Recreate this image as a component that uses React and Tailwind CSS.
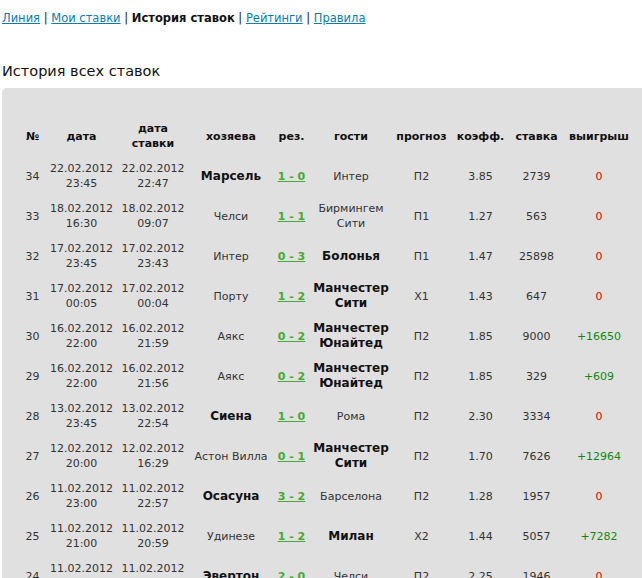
import React from 'react';

const rows = [
  ['34', '22.02.2012', '23:45', '22.02.2012', '22:47', ['Марсель'], true, '1 - 0', ['Интер'], false, 'П2', '3.85', '2739', '0'],
  ['33', '18.02.2012', '16:30', '18.02.2012', '09:07', ['Челси'], false, '1 - 1', ['Бирмингем', 'Сити'], false, 'П1', '1.27', '563', '0'],
  ['32', '17.02.2012', '23:45', '17.02.2012', '23:43', ['Интер'], false, '0 - 3', ['Болонья'], true, 'П1', '1.47', '25898', '0'],
  ['31', '17.02.2012', '00:05', '17.02.2012', '00:04', ['Порту'], false, '1 - 2', ['Манчестер', 'Сити'], true, 'X1', '1.43', '647', '0'],
  ['30', '16.02.2012', '22:00', '16.02.2012', '21:59', ['Аякс'], false, '0 - 2', ['Манчестер', 'Юнайтед'], true, 'П2', '1.85', '9000', '+16650'],
  ['29', '16.02.2012', '22:00', '16.02.2012', '21:56', ['Аякс'], false, '0 - 2', ['Манчестер', 'Юнайтед'], true, 'П2', '1.85', '329', '+609'],
  ['28', '13.02.2012', '23:45', '13.02.2012', '22:54', ['Сиена'], true, '1 - 0', ['Рома'], false, 'П2', '2.30', '3334', '0'],
  ['27', '12.02.2012', '20:00', '12.02.2012', '16:29', ['Астон Вилла'], false, '0 - 1', ['Манчестер', 'Сити'], true, 'П2', '1.70', '7626', '+12964'],
  ['26', '11.02.2012', '23:00', '11.02.2012', '22:57', ['Осасуна'], true, '3 - 2', ['Барселона'], false, 'П2', '1.28', '1957', '0'],
  ['25', '11.02.2012', '21:00', '11.02.2012', '20:59', ['Удинезе'], false, '1 - 2', ['Милан'], true, 'X2', '1.44', '5057', '+7282'],
  ['24', '11.02.2012', '19:00', '11.02.2012', '18:40', ['Эвертон'], true, '2 - 0', ['Челси'], false, 'П2', '2.25', '1946', '0'],
];

function Lines({ parts }) {
  return parts.map((p, i) => (
    <React.Fragment key={i}>
      {i > 0 && <br />}
      {p}
    </React.Fragment>
  ));
}

export default function App() {
  return (
    <div className="h-[578px] w-[642px] overflow-hidden bg-white text-[#333] text-[11px] leading-[15px]" style={{ fontFamily: '"DejaVu Sans", Verdana, sans-serif' }}>
      <div className="pl-[2px] pt-[11px] text-[11.5px] leading-[15px]">
        <a href="#" className="text-[#0a7dae] underline">Линия</a>
        <span className="text-[#222]"> | </span>
        <a href="#" className="text-[#0a7dae] underline">Мои ставки</a>
        <span className="text-[#222]"> | </span>
        <span className="font-bold text-[#111]">История ставок</span>
        <span className="text-[#222]"> | </span>
        <a href="#" className="text-[#0a7dae] underline">Рейтинги</a>
        <span className="text-[#222]"> | </span>
        <a href="#" className="text-[#0a7dae] underline">Правила</a>
      </div>

      <h2 className="pl-[2px] mt-[36px] text-[14.5px] leading-[18px] text-[#111]">История всех ставок</h2>

      <div className="ml-[2px] mt-[8px] w-[680px] rounded-tl-[5px] bg-[#e0e0e0] pl-[16px] pt-[28px]">
        <table className="table-fixed border-collapse text-center">
          <thead>
            <tr className="h-[40px] font-bold text-[#111]">
              <th className="w-[29px] font-bold">№</th>
              <th className="w-[69px] font-bold">дата</th>
              <th className="w-[74px] font-bold">дата<br />ставки</th>
              <th className="w-[82px] font-bold">хозяева</th>
              <th className="w-[39px] font-bold">рез.</th>
              <th className="w-[80px] font-bold">гости</th>
              <th className="w-[61px] font-bold">прогноз</th>
              <th className="w-[57px] font-bold">коэфф.</th>
              <th className="w-[55px] font-bold">ставка</th>
              <th className="w-[70px] font-bold">выигрыш</th>
            </tr>
          </thead>
          <tbody>
            {rows.map((r) => (
              <tr key={r[0]} className="h-[40px]">
                <td>{r[0]}</td>
                <td>{r[1]}<br />{r[2]}</td>
                <td>{r[3]}<br />{r[4]}</td>
                <td className={r[6] ? 'font-bold text-[12px] text-[#111] whitespace-nowrap' : 'whitespace-nowrap'}><Lines parts={r[5]} /></td>
                <td>
                  <a href="#" className="font-bold text-[#44aa33] underline whitespace-nowrap">{r[7]}</a>
                </td>
                <td className={r[9] ? 'font-bold text-[12px] text-[#111] whitespace-nowrap' : 'whitespace-nowrap'}><Lines parts={r[8]} /></td>
                <td>{r[10]}</td>
                <td>{r[11]}</td>
                <td>{r[12]}</td>
                <td className={r[13] === '0' ? 'text-[#dd0000]' : 'text-[#118811]'}>{r[13]}</td>
              </tr>
            ))}
          </tbody>
        </table>
      </div>
    </div>
  );
}
